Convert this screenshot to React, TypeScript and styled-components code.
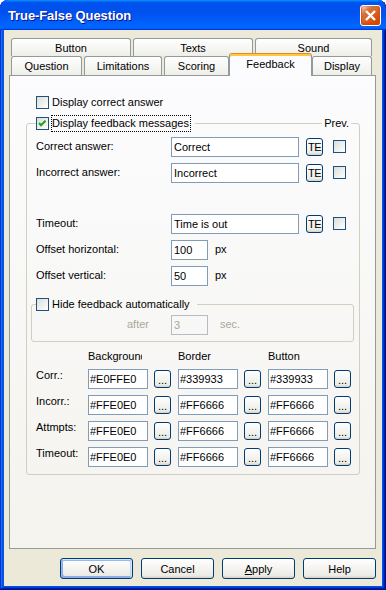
import React from "react";
import styled, { createGlobalStyle } from "styled-components";

const Global = createGlobalStyle`
  html, body { margin: 0; padding: 0; background: #ffffff; }
  body { font-family: "Liberation Sans", Arial, sans-serif; font-size: 11px; color: #000; }
  * { box-sizing: border-box; }
  button, input { font-family: "Liberation Sans", Arial, sans-serif; font-size: 11px; }
`;

const Window = styled.div`
  width: 386px;
  height: 590px;
  display: flex;
  flex-direction: column;
  background: #0055e5;
  border-radius: 8px 8px 0 0;
  overflow: hidden;
  box-shadow: inset -1px -1px #00138c, inset 1px 1px #0831d9, inset -2px -2px #001ea0,
    inset 2px 2px #166aee, inset -3px -3px #003bda, inset 3px 3px #0855dd;
`;

const TitleBar = styled.div`
  height: 30px;
  flex: none;
  display: flex;
  align-items: flex-start;
  justify-content: space-between;
  padding: 0 5px 0 8px;
  border-radius: 8px 8px 0 0;
  background: linear-gradient(180deg, #0997ff, #0053ee 8%, #0050ee 40%, #06f 88%, #06f 93%, #005bff 95%, #003dd7 96%, #003dd7);
`;

const Title = styled.span`
  margin-top: 8px;
  font: bold 13px "Liberation Sans", Arial, sans-serif;
  color: #fff;
  text-shadow: 1px 1px #0f1089;
  letter-spacing: -0.1px;
`;

const CloseBtn = styled.div`
  margin-top: 5px;
  width: 21px;
  height: 21px;
  border: 1px solid #fff;
  border-radius: 3px;
  background: radial-gradient(circle at 90% 90%, #cc4600 0%, #dc6527 55%, #cd7546 70%, #ffccb2 90%, #fff 100%);
  box-shadow: inset 0 -1px 2px 1px #da4600;
  display: flex;
  align-items: center;
  justify-content: center;
`;

const Client = styled.div`
  flex: 1;
  margin: 0 4px 4px 4px;
  background: #ece9d8;
  padding: 8px 6px 7px 5px;
  display: flex;
  flex-direction: column;
`;

const TabRow = styled.div<{ $h: number }>`
  display: flex;
  align-items: flex-end;
  height: ${(p) => p.$h}px;
  padding-left: 2px;
`;

const Tab = styled.div<{ $w: number; $active?: boolean }>`
  width: ${(p) => p.$w}px;
  height: ${(p) => (p.$active ? "23px" : "100%")};
  margin-left: ${(p) => (p.$active ? "0" : "2px")};
  margin-right: ${(p) => (p.$active ? "-2px" : "0")};
  margin-bottom: ${(p) => (p.$active ? "-1px" : "0")};
  &:first-child { margin-left: 0; }
  position: relative;
  z-index: ${(p) => (p.$active ? 2 : 0)};
  border: 1px solid #919b9c;
  border-bottom: none;
  border-top-color: ${(p) => (p.$active ? "#e68b2c" : "#919b9c")};
  border-radius: 3px 3px 0 0;
  background: ${(p) =>
    p.$active
      ? "#fcfcfe"
      : "linear-gradient(180deg, #fff 0%, #fafaf9 26%, #f0f0ea 95%, #ecebe5 100%)"};
  box-shadow: ${(p) => (p.$active ? "inset 0 2px #ffc83c" : "none")};
  padding-bottom: ${(p) => (p.$active ? "3px" : "0")};
  display: flex;
  align-items: center;
  justify-content: center;
  white-space: nowrap;
`;

const Panel = styled.div`
  position: relative;
  z-index: 1;
  height: 474px;
  flex: none;
  border: 1px solid #919b9c;
  background: linear-gradient(180deg, #fcfcfe, #f4f3ee);
  padding: 20px 15px 0 16px;
  display: flex;
  flex-direction: column;
`;

const CheckRow = styled.div<{ $ml?: number }>`
  display: flex;
  align-items: center;
  height: 13px;
  margin-left: ${(p) => p.$ml ?? 0}px;
`;

const Box = styled.span`
  width: 13px;
  height: 13px;
  flex: none;
  border: 1px solid #1c5180;
  background: linear-gradient(135deg, #dcdcd7 0%, #ffffff 100%);
  display: inline-flex;
  align-items: center;
  justify-content: center;
`;

const CheckText = styled.span<{ $focus?: boolean }>`
  margin-left: ${(p) => (p.$focus ? "2px" : "3px")};
  white-space: nowrap;
  line-height: 13px;
  padding: ${(p) => (p.$focus ? "1px 1px 1px 0" : "0")};
  border: ${(p) => (p.$focus ? "1px dotted #000" : "none")};
`;

const Group = styled.div<{ $mt: number; $ml?: number; $mr?: number; $pb: number; $pl?: number }>`
  border: 1px solid #d0d0bf;
  border-radius: 3px;
  margin: ${(p) => p.$mt}px ${(p) => p.$mr ?? 0}px 0 ${(p) => p.$ml ?? 0}px;
  padding: 0 0 ${(p) => p.$pb}px ${(p) => p.$pl ?? 0}px;
  display: flex;
  flex-direction: column;
`;

const GroupHeader = styled.div<{ $pl: number; $pr?: number }>`
  display: flex;
  align-items: center;
  height: 13px;
  margin-top: -7px;
  padding-left: ${(p) => p.$pl}px;
  padding-right: ${(p) => p.$pr ?? 0}px;
`;

const Legend = styled.div<{ $bg: string; $pr: number }>`
  display: flex;
  align-items: center;
  background: ${(p) => p.$bg};
  padding-right: ${(p) => p.$pr}px;
`;

const Spacer = styled.div`
  flex: 1;
`;

const LegendNote = styled.span<{ $bg: string }>`
  background: ${(p) => p.$bg};
  padding: 0 2px;
  line-height: 13px;
`;

const FieldRow = styled.div<{ $mt: number }>`
  display: flex;
  align-items: flex-start;
  height: 20px;
  margin-top: ${(p) => p.$mt}px;
`;

const FieldLabel = styled.span`
  width: 135px;
  flex: none;
  padding-top: 3px;
  line-height: 13px;
  white-space: nowrap;
`;

const TextInput = styled.div<{ $w: number; $disabled?: boolean; $pl?: number }>`
  width: ${(p) => p.$w}px;
  height: 20px;
  flex: none;
  border: 1px solid ${(p) => (p.$disabled ? "#b6bcc2" : "#7f9db9")};
  background: ${(p) => (p.$disabled ? "transparent" : "#fff")};
  color: ${(p) => (p.$disabled ? "#aca899" : "#000")};
  padding-left: ${(p) => p.$pl ?? 2}px;
  display: flex;
  align-items: center;
  white-space: nowrap;
  overflow: hidden;
`;

const SmallBtn = styled.div<{ $ml: number; $dots?: boolean }>`
  width: 17px;
  height: 18px;
  flex: none;
  margin-left: ${(p) => p.$ml}px;
  margin-top: 1px;
  border: 1px solid #003c74;
  border-radius: 3px;
  background: linear-gradient(180deg, #fff, #ecebe6 86%, #d6d0c5);
  display: flex;
  align-items: ${(p) => (p.$dots ? "flex-end" : "center")};
  justify-content: center;
  line-height: 12px;
  letter-spacing: ${(p) => (p.$dots ? "0" : "-0.6px")};
  padding-bottom: ${(p) => (p.$dots ? "1px" : "0")};
  overflow: visible;
  white-space: nowrap;
`;

const RowCheck = styled(Box)`
  margin-left: 10px;
  margin-top: 3px;
`;

const Unit = styled.span<{ $ml: number }>`
  margin-left: ${(p) => p.$ml}px;
  padding-top: 3px;
  line-height: 13px;
`;

const AfterRow = styled.div`
  display: flex;
  align-items: flex-start;
  margin-top: 4px;
  height: 20px;
`;

const Muted = styled.span<{ $w?: number; $ml: number }>`
  width: ${(p) => (p.$w ? `${p.$w}px` : "auto")};
  flex: none;
  margin-left: ${(p) => p.$ml}px;
  padding-top: 3px;
  line-height: 13px;
  color: #aca899;
`;

const ColorGrid = styled.div`
  margin-top: 8px;
  display: grid;
  grid-template-columns: 52px 90px 90px 84px;
  grid-auto-rows: 20px;
  grid-template-rows: 13px;
  row-gap: 6px;
`;

const ColHead = styled.span<{ $clip?: boolean }>`
  width: ${(p) => (p.$clip ? "54px" : "auto")};
  overflow: hidden;
  white-space: nowrap;
  line-height: 13px;
`;

const RowHead = styled.span`
  line-height: 13px;
  white-space: nowrap;
`;

const ColorCell = styled.div`
  display: flex;
  align-items: flex-start;
`;

const ButtonBar = styled.div`
  margin-top: 9px;
  display: flex;
  justify-content: flex-end;
  gap: 8px;
`;

const DlgBtn = styled.div<{ $default?: boolean }>`
  width: 73px;
  height: 21px;
  border: 1px solid #003c74;
  border-radius: 3px;
  background: linear-gradient(180deg, #fff, #ecebe6 86%, #d6d0c5);
  box-shadow: ${(p) =>
    p.$default
      ? "inset -1px 1px #cee7ff, inset 1px 2px #98b8ea, inset -2px 2px #bcd4f6, inset 1px -1px #89ade4, inset 2px -2px #89ade4"
      : "none"};
  display: flex;
  align-items: center;
  justify-content: center;
`;

const Check = () => (
  <svg width="11" height="11" viewBox="0 0 11 11">
    <polyline points="2,5 4,7.2 8.5,2.7" fill="none" stroke="#21a121" strokeWidth="2" />
  </svg>
);

const CloseX = () => (
  <svg width="19" height="19" viewBox="0 0 19 19">
    <path d="M5 5 L14 14 M14 5 L5 14" stroke="#fff" strokeWidth="2.4" fill="none" />
  </svg>
);

const colorRows = [
  { label: "Corr.:", values: ["#E0FFE0", "#339933", "#339933"] },
  { label: "Incorr.:", values: ["#FFE0E0", "#FF6666", "#FF6666"] },
  { label: "Attmpts:", values: ["#FFE0E0", "#FF6666", "#FF6666"] },
  { label: "Timeout:", values: ["#FFE0E0", "#FF6666", "#FF6666"] },
];

export default function App() {
  return (
    <>
      <Global />
      <Window>
        <TitleBar>
          <Title>True-False Question</Title>
          <CloseBtn>
            <CloseX />
          </CloseBtn>
        </TitleBar>
        <Client>
          <TabRow $h={18}>
            <Tab $w={120}>Button</Tab>
            <Tab $w={120}>Texts</Tab>
            <Tab $w={117}>Sound</Tab>
          </TabRow>
          <TabRow $h={19}>
            <Tab $w={71}>Question</Tab>
            <Tab $w={78}>Limitations</Tab>
            <Tab $w={65}>Scoring</Tab>
            <Tab $w={83} $active>Feedback</Tab>
            <Tab $w={60}>Display</Tab>
          </TabRow>
          <Panel>
            <CheckRow $ml={10}>
              <Box />
              <CheckText>Display correct answer</CheckText>
            </CheckRow>

            <Group $mt={14} $pb={7} $pl={9}>
              <GroupHeader $pl={0} $pr={8}>
                <Legend $bg="#fbfbfc" $pr={4}>
                  <Box>
                    <Check />
                  </Box>
                  <CheckText $focus>Display feedback messages</CheckText>
                </Legend>
                <Spacer />
                <LegendNote $bg="#fbfbfc">Prev.</LegendNote>
              </GroupHeader>

              <FieldRow $mt={7}>
                <FieldLabel>Correct answer:</FieldLabel>
                <TextInput $w={128}>Correct</TextInput>
                <SmallBtn $ml={7}>TE</SmallBtn>
                <RowCheck />
              </FieldRow>
              <FieldRow $mt={6}>
                <FieldLabel>Incorrect answer:</FieldLabel>
                <TextInput $w={128}>Incorrect</TextInput>
                <SmallBtn $ml={7}>TE</SmallBtn>
                <RowCheck />
              </FieldRow>
              <FieldRow $mt={31}>
                <FieldLabel>Timeout:</FieldLabel>
                <TextInput $w={128}>Time is out</TextInput>
                <SmallBtn $ml={7}>TE</SmallBtn>
                <RowCheck />
              </FieldRow>
              <FieldRow $mt={6}>
                <FieldLabel>Offset horizontal:</FieldLabel>
                <TextInput $w={37}>100</TextInput>
                <Unit $ml={7}>px</Unit>
              </FieldRow>
              <FieldRow $mt={6}>
                <FieldLabel>Offset vertical:</FieldLabel>
                <TextInput $w={37}>50</TextInput>
                <Unit $ml={7}>px</Unit>
              </FieldRow>

              <Group $mt={18} $ml={-5} $mr={5} $pb={6}>
                <GroupHeader $pl={4}>
                  <Legend $bg="#f8f8f6" $pr={7}>
                    <Box />
                    <CheckText>Hide feedback automatically</CheckText>
                  </Legend>
                </GroupHeader>
                <AfterRow>
                  <Muted $ml={95} $w={44}>after</Muted>
                  <TextInput $w={37} $disabled>3</TextInput>
                  <Muted $ml={12}>sec.</Muted>
                </AfterRow>
              </Group>

              <ColorGrid>
                <span />
                <ColHead $clip>Background</ColHead>
                <ColHead>Border</ColHead>
                <ColHead>Button</ColHead>
                {colorRows.map((r) => (
                  <React.Fragment key={r.label + r.values[0]}>
                    <RowHead>{r.label}</RowHead>
                    {r.values.map((v, i) => (
                      <ColorCell key={i}>
                        <TextInput $w={60} $pl={1}>{v}</TextInput>
                        <SmallBtn $ml={6} $dots>...</SmallBtn>
                      </ColorCell>
                    ))}
                  </React.Fragment>
                ))}
              </ColorGrid>
            </Group>
          </Panel>
          <ButtonBar>
            <DlgBtn $default>OK</DlgBtn>
            <DlgBtn>Cancel</DlgBtn>
            <DlgBtn>
              <span>
                <u>A</u>pply
              </span>
            </DlgBtn>
            <DlgBtn>Help</DlgBtn>
          </ButtonBar>
        </Client>
      </Window>
    </>
  );
}
